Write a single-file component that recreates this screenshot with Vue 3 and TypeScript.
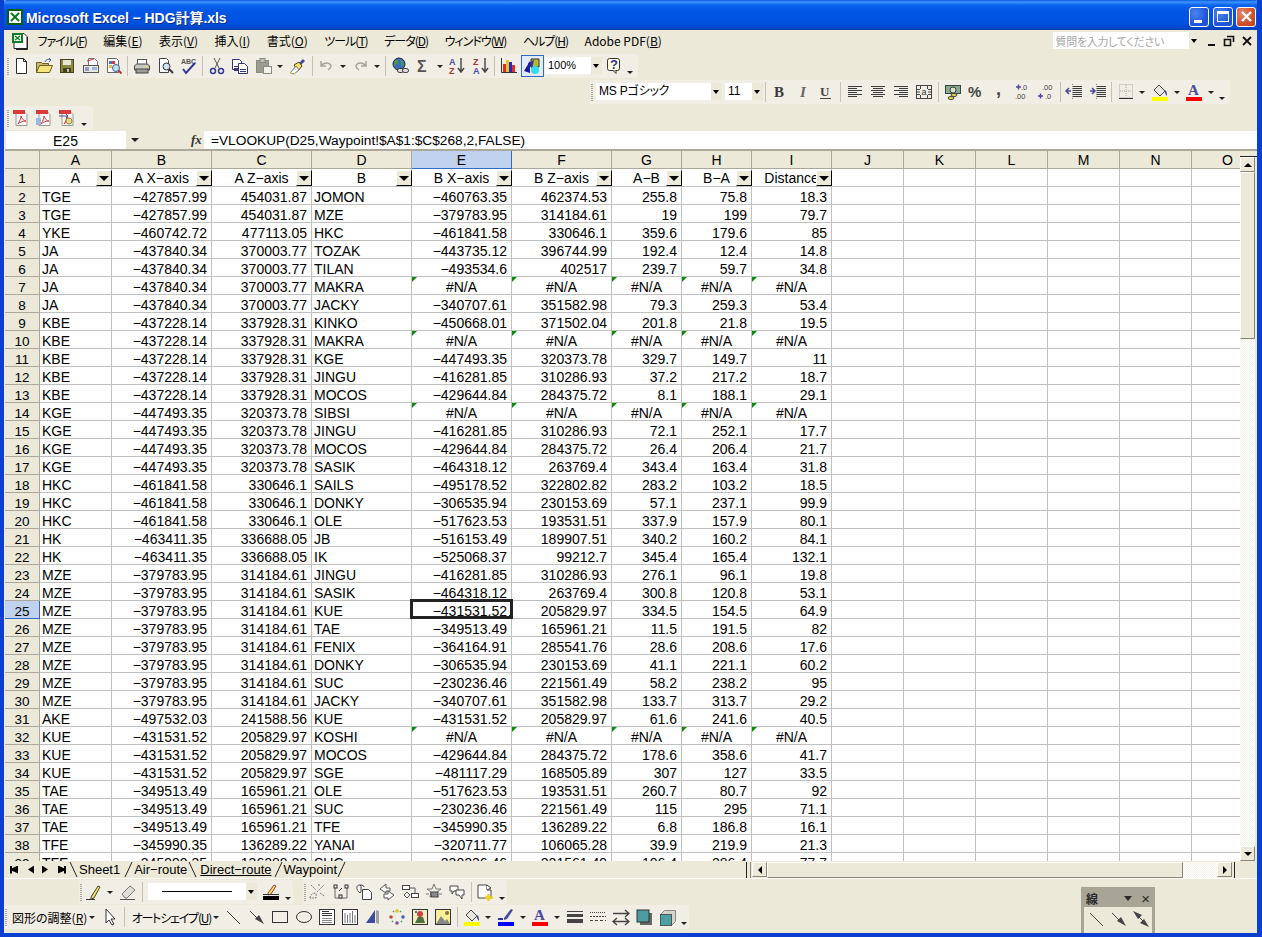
<template>
  <div class="window">
    <div class="titlebar">
      <svg class="app-icon" width="16" height="16" viewBox="0 0 16 16">
        <rect width="16" height="16" fill="#0b5c14" />
        <rect x="2" y="2" width="12" height="12" fill="#fff" />
        <path d="M4 4l8 8M12 4l-8 8" stroke="#0b7a1c" stroke-width="2" />
      </svg>
      <span class="title-text">Microsoft Excel − HDG計算.xls</span>
      <div class="win-buttons">
        <button class="win-btn"><i class="min-glyph"></i></button>
        <button class="win-btn"><i class="max-glyph"></i></button>
        <button class="win-btn close">
          <svg width="13" height="13" viewBox="0 0 13 13"><path d="M2 2l9 9M11 2l-9 9" stroke="#fff" stroke-width="2.4" /></svg>
        </button>
      </div>
    </div>

    <div class="menubar">
      <svg class="menu-doc" width="18" height="18" viewBox="0 0 18 18" v-html="icons.xldoc"></svg>
      <span v-for="m in menus" :key="m.key" class="menu-item" :class="{ kana: m.kana }">{{ m.pre }}<u v-if="m.key">{{ m.key }}</u>{{ m.post }}</span>
      <div class="ask-box"><span>質問を入力してください</span><i class="drop"></i></div>
      <div class="mdi">
        <i class="mdi-min"></i>
        <svg width="12" height="12" viewBox="0 0 12 12"><path d="M4 1.5h6.5V7M1.5 4.5h6v6h-6z" fill="none" stroke="#111" stroke-width="1.6" /></svg>
        <svg width="12" height="12" viewBox="0 0 12 12"><path d="M2 2l8 8M10 2l-8 8" stroke="#111" stroke-width="1.8" /></svg>
      </div>
    </div>

    <div v-for="(bar, bi) in topBars" :key="bi" class="toolbar" :class="bar.cls">
      <template v-for="(it, ii) in bar.items" :key="ii">
        <i v-if="it === ':'" class="grip"></i>
        <i v-else-if="it === '|'" class="sep"></i>
        <i v-else-if="it === 'v'" class="dd"></i>
        <i v-else-if="it === '>'" class="chev"></i>
        <div v-else-if="typeof it === 'object'" class="combo" :class="it.cls"><span>{{ it.text }}</span><i class="drop"></i></div>
        <span v-else class="tb" :class="{ on: it === 'drawing' }">
          <svg width="18" height="18" viewBox="0 0 18 18" v-html="icons[it]"></svg>
        </span>
      </template>
    </div>

    <div class="formula-bar">
      <div class="name-box">E25</div>
      <i class="name-drop"></i>
      <span class="fx">fx</span>
      <div class="formula">=VLOOKUP(D25,Waypoint!$A$1:$C$268,2,FALSE)</div>
    </div>

    <div class="sheet">
      <div class="grid">
        <div class="cell head corner"></div>
        <div v-for="c in columns" :key="c" class="cell head" :class="{ active: c === 'E' }">{{ c }}</div>

        <div class="cell head rowno first">1</div>
        <div v-for="(h, i) in headers" :key="h + i" class="cell title">
          {{ h }}<i class="filter"></i>
        </div>
        <div v-for="n in 6" :key="'e' + n" class="cell"></div>

        <template v-for="(row, r) in rows" :key="r">
          <div class="cell head rowno" :class="{ active: r + 2 === 25 }">{{ r + 2 }}</div>
          <div
            v-for="(v, c) in row"
            :key="c"
            class="cell"
            :class="cellClass(v, c, r)"
          >{{ v }}</div>
          <div v-for="n in 6" :key="'b' + n" class="cell"></div>
        </template>
      </div>
      <div class="vscroll">
        <i class="v-split"></i>
        <button class="sb-btn"><i class="arrow up"></i></button>
        <div class="v-thumb"></div>
        <div class="track"></div>
        <button class="sb-btn"><i class="arrow down"></i></button>
      </div>
    </div>

    <div class="tabbar">
      <div class="tab-nav">
        <i class="nav first"></i><i class="nav prev"></i><i class="nav next"></i><i class="nav last"></i>
      </div>
      <svg class="slash" width="10" height="16" viewBox="0 0 10 16"><path d="M1 0l7 15" stroke="#222" fill="none" /></svg>
      <span class="tab">Sheet1</span>
      <svg class="slash wide" width="14" height="16" viewBox="0 0 14 16"><path d="M5 15L12 0" stroke="#222" fill="none" /></svg>
      <span class="tab">Air−route</span>
      <svg class="slash" width="13" height="16" viewBox="0 0 13 16"><path d="M2 0l7 15" stroke="#222" fill="none" /></svg>
      <span class="tab current">Direct−route</span>
      <svg class="slash" width="12" height="16" viewBox="0 0 12 16"><path d="M3 15L10 0" stroke="#222" fill="none" /></svg>
      <span class="tab">Waypoint</span>
      <svg class="slash" width="10" height="16" viewBox="0 0 10 16"><path d="M1 15L8 0" stroke="#222" fill="none" /></svg>
      <div class="tab-fill"></div>
      <i class="h-split"></i>
      <button class="sb-btn"><i class="arrow left"></i></button>
      <div class="h-thumb"></div>
      <div class="track h"></div>
      <button class="sb-btn"><i class="arrow right"></i></button>
      <i class="h-end"></i>
    </div>

    <div class="draw-dock">
      <div v-for="(line, li) in drawLines" :key="li" class="draw-line" :class="line.cls">
        <div v-for="(bar, bi) in line.bars" :key="bi" class="toolbar flat">
          <template v-for="(it, ii) in bar" :key="ii">
            <i v-if="it === ':'" class="grip"></i>
            <i v-else-if="it === '|'" class="sep"></i>
            <i v-else-if="it === 'v'" class="dd"></i>
            <i v-else-if="it === '>'" class="chev"></i>
            <div v-else-if="typeof it === 'object' && it.cls === 'line-box'" class="combo line-box"><i class="rule"></i><i class="drop"></i></div>
            <span v-else-if="typeof it === 'object'" class="label" :class="it.cls">{{ it.pre }}<u>{{ it.key }}</u>)</span>
            <span v-else class="tb">
              <svg width="18" height="18" viewBox="0 0 18 18" v-html="icons[it]"></svg>
            </span>
          </template>
        </div>
      </div>

      <div class="float-bar">
        <div class="float-title"><b>線</b><i class="float-drop"></i><span>×</span></div>
        <div class="float-icons">
          <svg width="18" height="18" viewBox="0 0 18 18" v-html="icons.line"></svg>
          <svg width="18" height="18" viewBox="0 0 18 18" v-html="icons.arrowline"></svg>
          <svg width="18" height="18" viewBox="0 0 18 18" v-html="icons.dblarrow"></svg>
        </div>
      </div>
    </div>
  </div>
</template>

<script setup lang="ts">
type Combo = { text?: string; cls: string; pre?: string; key?: string }
type Item = string | Combo

const menus = [
  { pre: 'ファイル(', key: 'F', post: ')', kana: true },
  { pre: '編集(', key: 'E', post: ')' },
  { pre: '表示(', key: 'V', post: ')' },
  { pre: '挿入(', key: 'I', post: ')' },
  { pre: '書式(', key: 'O', post: ')' },
  { pre: 'ツール(', key: 'T', post: ')', kana: true },
  { pre: 'データ(', key: 'D', post: ')', kana: true },
  { pre: 'ウィンドウ(', key: 'W', post: ')', kana: true },
  { pre: 'ヘルプ(', key: 'H', post: ')', kana: true },
  { pre: 'Adobe PDF(', key: 'B', post: ')' },
]

const topBars: { cls: string; items: Item[] }[] = [
  {
    cls: 'std',
    items: [':', 'new', 'open', 'save', 'mail', 'perm', '|', 'print', 'preview', 'spell', '|', 'cut', 'copy', 'paste', 'v', 'brush', '|', 'undo', 'v', 'redo', 'v', '|', 'globe', 'sigma', 'v', 'az', 'za', '|', 'chart', 'drawing', { text: '100%', cls: 'zoom' }, 'help', '>'],
  },
  {
    cls: 'fmt',
    items: [':', { text: 'MS Pゴシック', cls: 'font' }, { text: '11', cls: 'size' }, '|', 'bold', 'italic', 'under', '|', 'aleft', 'acenter', 'aright', 'merge', '|', 'money', 'pct', 'comma', 'incdec', 'decdec', '|', 'outdent', 'indent', '|', 'border', 'v', 'fill', 'v', 'fontc', 'v', '>'],
  },
  { cls: 'pdf', items: [':', 'pdf1', 'pdf2', 'pdf3', '>'] },
]

const drawLines: { cls: string; bars: Item[][] }[] = [
  {
    cls: 'one',
    bars: [
      [':', 'pen', 'v', 'eraser', '|', { cls: 'line-box' }, 'linec', '>'],
      [':', 'd1', 'd2', 'd3', 'd4', 'd5', 'd6', 'd7', '|', 'd8', '>'],
    ],
  },
  {
    cls: 'two',
    bars: [
      [':', { cls: 'lab', pre: '図形の調整(', key: 'R' }, 'v', 'cursor', '|', { cls: 'lab kana', pre: 'オートシェイプ(', key: 'U' }, 'v', 'line', 'arrowline', 'rect', 'ellipse', 'textbox', 'vtext', 'wordart', 'diagram', 'clipart', 'image', '|', 'fill', 'v', 'linecolor', 'v', 'fontc', 'v', 'lstyle', 'dash', 'arrows', 'shadow', 'cube', '>'],
    ],
  },
]

const columns = ['A', 'B', 'C', 'D', 'E', 'F', 'G', 'H', 'I', 'J', 'K', 'L', 'M', 'N', 'O']
const headers = ['A', 'A X−axis', 'A Z−axis', 'B', 'B X−axis', 'B Z−axis', 'A−B', 'B−A', 'Distance']

const NA = '#N/A'
const TGE = ['TGE', '−427857.99', '454031.87']
const YKE = ['YKE', '−460742.72', '477113.05']
const JA = ['JA', '−437840.34', '370003.77']
const KBE = ['KBE', '−437228.14', '337928.31']
const KGE = ['KGE', '−447493.35', '320373.78']
const HKC = ['HKC', '−461841.58', '330646.1']
const HK = ['HK', '−463411.35', '336688.05']
const MZE = ['MZE', '−379783.95', '314184.61']
const AKE = ['AKE', '−497532.03', '241588.56']
const KUE = ['KUE', '−431531.52', '205829.97']
const TAE = ['TAE', '−349513.49', '165961.21']
const TFE = ['TFE', '−345990.35', '136289.22']

const rows: string[][] = [
  [...TGE, 'JOMON', '−460763.35', '462374.53', '255.8', '75.8', '18.3'],
  [...TGE, 'MZE', '−379783.95', '314184.61', '19', '199', '79.7'],
  [...YKE, 'HKC', '−461841.58', '330646.1', '359.6', '179.6', '85'],
  [...JA, 'TOZAK', '−443735.12', '396744.99', '192.4', '12.4', '14.8'],
  [...JA, 'TILAN', '−493534.6', '402517', '239.7', '59.7', '34.8'],
  [...JA, 'MAKRA', NA, NA, NA, NA, NA],
  [...JA, 'JACKY', '−340707.61', '351582.98', '79.3', '259.3', '53.4'],
  [...KBE, 'KINKO', '−450668.01', '371502.04', '201.8', '21.8', '19.5'],
  [...KBE, 'MAKRA', NA, NA, NA, NA, NA],
  [...KBE, 'KGE', '−447493.35', '320373.78', '329.7', '149.7', '11'],
  [...KBE, 'JINGU', '−416281.85', '310286.93', '37.2', '217.2', '18.7'],
  [...KBE, 'MOCOS', '−429644.84', '284375.72', '8.1', '188.1', '29.1'],
  [...KGE, 'SIBSI', NA, NA, NA, NA, NA],
  [...KGE, 'JINGU', '−416281.85', '310286.93', '72.1', '252.1', '17.7'],
  [...KGE, 'MOCOS', '−429644.84', '284375.72', '26.4', '206.4', '21.7'],
  [...KGE, 'SASIK', '−464318.12', '263769.4', '343.4', '163.4', '31.8'],
  [...HKC, 'SAILS', '−495178.52', '322802.82', '283.2', '103.2', '18.5'],
  [...HKC, 'DONKY', '−306535.94', '230153.69', '57.1', '237.1', '99.9'],
  [...HKC, 'OLE', '−517623.53', '193531.51', '337.9', '157.9', '80.1'],
  [...HK, 'JB', '−516153.49', '189907.51', '340.2', '160.2', '84.1'],
  [...HK, 'IK', '−525068.37', '99212.7', '345.4', '165.4', '132.1'],
  [...MZE, 'JINGU', '−416281.85', '310286.93', '276.1', '96.1', '19.8'],
  [...MZE, 'SASIK', '−464318.12', '263769.4', '300.8', '120.8', '53.1'],
  [...MZE, 'KUE', '−431531.52', '205829.97', '334.5', '154.5', '64.9'],
  [...MZE, 'TAE', '−349513.49', '165961.21', '11.5', '191.5', '82'],
  [...MZE, 'FENIX', '−364164.91', '285541.76', '28.6', '208.6', '17.6'],
  [...MZE, 'DONKY', '−306535.94', '230153.69', '41.1', '221.1', '60.2'],
  [...MZE, 'SUC', '−230236.46', '221561.49', '58.2', '238.2', '95'],
  [...MZE, 'JACKY', '−340707.61', '351582.98', '133.7', '313.7', '29.2'],
  [...AKE, 'KUE', '−431531.52', '205829.97', '61.6', '241.6', '40.5'],
  [...KUE, 'KOSHI', NA, NA, NA, NA, NA],
  [...KUE, 'MOCOS', '−429644.84', '284375.72', '178.6', '358.6', '41.7'],
  [...KUE, 'SGE', '−481117.29', '168505.89', '307', '127', '33.5'],
  [...TAE, 'OLE', '−517623.53', '193531.51', '260.7', '80.7', '92'],
  [...TAE, 'SUC', '−230236.46', '221561.49', '115', '295', '71.1'],
  [...TAE, 'TFE', '−345990.35', '136289.22', '6.8', '186.8', '16.1'],
  [...TFE, 'YANAI', '−320711.77', '106065.28', '39.9', '219.9', '21.3'],
  [...TFE, 'SUC', '−230236.46', '221561.49', '106.4', '286.4', '77.7'],
]

function cellClass(v: string, c: number, r: number) {
  return {
    txt: c === 0 || c === 3,
    num: c !== 0 && c !== 3,
    err: v === NA,
    selected: c === 4 && r + 2 === 25,
  }
}

const ink = '#3c3c3c'
const blue = '#4a4a9c'
const serif = 'font-weight="bold" style="font-family:\'Liberation Serif\',serif"'
const txt = (x: number, y: number, s: string, size: number, fill: string, extra = '') =>
  `<text x="${x}" y="${y}" font-family="Liberation Sans, sans-serif" font-size="${size}" fill="${fill}" ${extra}>${s}</text>`
const lines = (ys: number[], x1: number, x2: number, c = ink) =>
  ys.map((y) => `<path d="M${x1} ${y}.5H${x2}" stroke="${c}" />`).join('')
const pdf = (extra: string) =>
  `<path d="M4 2.5h8l3 3v11H4z" fill="#f8f8f8" stroke="#9a9a8c" /><rect x="1" y="1" width="12" height="4" fill="#d93a3a" /><path d="M6 15c2-3 3-6 3-8 1 3 3 5 5 5-3 0-6 1-8 3z" fill="none" stroke="#d93a3a" />${extra}`

const icons: Record<string, string> = {
  xldoc: `<path d="M3 1.5h10l3 3v12H3z" fill="#fff" stroke="#222" /><path d="M16.5 5v12.5H5" stroke="#222" fill="none" /><rect x="1" y="1" width="11" height="10" fill="#0f7f24" /><rect x="3" y="3" width="7" height="6" fill="#fff" /><path d="M4 4l5 4M9 4L4 8" stroke="#0f7f24" stroke-width="1.5" />`,
  new: `<path d="M4.5 1.5h7l3 3v12h-10z" fill="#fff" stroke="#2c2c2c" /><path d="M11.5 1.5v3h3" fill="none" stroke="#2c2c2c" />`,
  open: `<path d="M1.5 15.5v-10h5l1 1h6v2" fill="#c9b96a" stroke="#6e5f1e" /><path d="M1.5 15.5l3-7h13l-3 7z" fill="#f4e37e" stroke="#6e5f1e" /><path d="M10 5c1-3 4-3 6-2M14 1l2 2-2 2" fill="none" stroke="#3a56a0" />`,
  save: `<rect x="2.5" y="2.5" width="13" height="13" fill="#8c8742" stroke="#45431f" /><rect x="5" y="3" width="8" height="5" fill="#e8e6d4" /><rect x="5" y="11" width="8" height="4" fill="#45431f" /><rect x="9" y="12" width="2" height="3" fill="#c8c6a4" />`,
  mail: `<path d="M6.5 1.5h6l3 3v5h-9z" fill="#fff" stroke="#777" /><path d="M5 4l7-2" stroke="#d04040" /><rect x="1.5" y="8.5" width="15" height="7" fill="#e8e8e8" stroke="#555" /><path d="M3 11h4M3 13h4" stroke="#4a4a9c" /><rect x="10" y="10" width="5" height="3" fill="#9fb5d5" />`,
  perm: `<path d="M2.5 1.5h9l2 2v12h-11z" fill="#fff" stroke="#666" /><rect x="4" y="4" width="3" height="3" fill="#3a78c0" /><rect x="7" y="4" width="3" height="3" fill="#d04040" /><rect x="4" y="8" width="3" height="3" fill="#e0c040" /><circle cx="11" cy="11" r="3.5" fill="#bfe0ee" stroke="#3c5c90" /><path d="M13.5 13.5l3 3" stroke="#c03030" stroke-width="2" />`,
  print: `<rect x="4.5" y="2.5" width="9" height="5" fill="#fff" stroke="#555" /><path d="M1.5 13V9l2-2h11l2 2v4z" fill="#c8c8c0" stroke="#444" /><rect x="3" y="12" width="12" height="4" fill="#9c9c94" stroke="#444" /><path d="M12 10h2" stroke="#ffe040" />`,
  preview: `<path d="M3.5 1.5h7l2 2v12h-9z" fill="#fff" stroke="#444" /><circle cx="10.5" cy="9.5" r="3.5" fill="#cfe3f3" stroke="#333" /><path d="M13 12l4 4" stroke="#333" stroke-width="2" />`,
  spell: `${txt(1, 7, 'ABC', 7, '#555', 'font-weight="bold"')}<path d="M3 12l3 4 9-10" fill="none" stroke="#35359a" stroke-width="2" />`,
  cut: `<path d="M6 1l5 10M12 1L7 11" stroke="#555" fill="none" /><circle cx="5" cy="14" r="2.5" fill="none" stroke="#3a3a9c" stroke-width="1.5" /><circle cx="13" cy="14" r="2.5" fill="none" stroke="#3a3a9c" stroke-width="1.5" />`,
  copy: `<path d="M1.5 2.5h7l2 2v8h-9z" fill="#fff" stroke="#35357a" /><path d="M7.5 6.5h6l3 3v7h-9z" fill="#fff" stroke="#35357a" />${lines([9, 11, 13], 3, 7, '#35357a')}${lines([12, 14], 9, 15, '#35357a')}`,
  paste: `<rect x="1.5" y="3.5" width="12" height="12" fill="#9c9c90" stroke="#8a8a80" /><rect x="5" y="1.5" width="5" height="4" fill="#bdbdb0" stroke="#8a8a80" /><rect x="8.5" y="9.5" width="8" height="7" fill="#f3f2ea" stroke="#8a8a80" />`,
  brush: `<path d="M10 6l4-4 2 2-4 4z" fill="#4a4a9c" /><path d="M5 8l5-3 3 4-4 5z" fill="#f5e35e" stroke="#444" /><path d="M1 16l6-7 3 4-5 4z" fill="#fff" stroke="#777" /><path d="M1 16h2M5 17h2" stroke="#ffe040" />`,
  undo: `<path d="M4 4v5h5M4 9c3-4 9-4 10 0 0 2-2 3-3 4" fill="none" stroke="#a8a69a" stroke-width="1.5" />`,
  redo: `<path d="M14 4v5H9M14 9c-3-4-9-4-10 0 0 2 2 3 3 4" fill="none" stroke="#a8a69a" stroke-width="1.5" />`,
  globe: `<circle cx="8" cy="7" r="6" fill="#3b6fb8" stroke="#223" /><path d="M4 3c2 0 4 1 3 3-1 1-3 1-4 3M9 2c2 2 3 3 4 7-2 0-3-2-3-3" fill="#4aa04a" /><rect x="6.5" y="11.5" width="6" height="4" rx="2" fill="#ddd" stroke="#333" /><rect x="11.5" y="11.5" width="6" height="4" rx="2" fill="#ddd" stroke="#333" />`,
  sigma: txt(3, 15, 'Σ', 16, '#555', 'font-weight="bold"'),
  az: `${txt(1, 8, 'A', 9, '#4a4aa4', 'font-weight="bold"')}${txt(1, 17, 'Z', 9, '#a03838', 'font-weight="bold"')}<path d="M13 1v13M10 11l3 4 3-4" fill="none" stroke="#444" stroke-width="1.4" />`,
  za: `${txt(1, 8, 'Z', 9, '#a03838', 'font-weight="bold"')}${txt(1, 17, 'A', 9, '#4a4aa4', 'font-weight="bold"')}<path d="M13 1v13M10 11l3 4 3-4" fill="none" stroke="#444" stroke-width="1.4" />`,
  chart: `<path d="M1.5 1v14.5H17" fill="none" stroke="#333" /><rect x="3" y="7" width="3" height="8" fill="#d83030" /><rect x="6" y="3" width="3" height="12" fill="#e8c820" /><rect x="9" y="5" width="3" height="10" fill="#2828c8" /><rect x="12" y="8" width="3" height="7" fill="#d83030" />`,
  drawing: `<path d="M8 2h8v8H8z" fill="#b8b830" stroke="#333" /><path d="M5 6l6-3-2 9z" fill="#30309c" /><path d="M1 14L7 4v12z" fill="#1a1a9c" /><circle cx="12" cy="13" r="4" fill="#33dcec" />`,
  help: `<rect x="2.5" y="1.5" width="12" height="12" rx="2" fill="#fffde0" stroke="#333" /><path d="M8 13.5l3 3v-3" fill="#fffde0" stroke="#333" />${txt(5, 12, '?', 13, '#30309c', 'font-weight="bold"')}`,
  bold: txt(3, 14, 'B', 15, '#3c3c3c', serif),
  italic: txt(6, 14, 'I', 15, '#666', `${serif} font-style="italic"`),
  under: `${txt(3, 13, 'U', 13, '#444', serif)}<path d="M3 15.5h11" stroke="#444" />`,
  aleft: lines([3, 7, 11], 2, 16) + lines([5, 9, 13], 2, 11),
  acenter: lines([3, 7, 11], 2, 16) + lines([5, 9, 13], 4, 14),
  aright: lines([3, 7, 11], 2, 16) + lines([5, 9, 13], 7, 16),
  merge: `<rect x="1.5" y="2.5" width="15" height="13" fill="none" stroke="#444" /><path d="M1 6.5h4M13 6.5h4M1 11.5h4M13 11.5h4M5.5 3v3M12.5 3v3M5.5 12v3M12.5 12v3" stroke="#444" /><path d="M2 9h3M13 9h3" stroke="#444" />${txt(6.5, 12, 'a', 9, '#333')}`,
  money: `<rect x="1.5" y="2.5" width="15" height="8" fill="#8aa88a" stroke="#344" /><circle cx="9" cy="7" r="3" fill="#d8e0c8" stroke="#344" /><ellipse cx="10" cy="12" rx="3" ry="1.5" fill="#e8dc50" stroke="#444" /><ellipse cx="7" cy="15" rx="3" ry="1.5" fill="#e8dc50" stroke="#444" />`,
  pct: txt(1, 14, '%', 15, '#444', 'font-weight="bold"'),
  comma: txt(6, 12, ',', 18, '#444', 'font-weight="bold"'),
  incdec: `<path d="M2 4h5M4.5 1.5v5" stroke="${blue}" stroke-width="1.5" />${txt(7, 7, '.0', 7.5, '#444')}${txt(1, 16, '.00', 7.5, '#444')}`,
  decdec: `${txt(5, 7, '.00', 7.5, '#444')}<path d="M1 13h5M3.5 10.5v5" stroke="${blue}" stroke-width="1.5" />${txt(8, 16, '.0', 7.5, '#444')}`,
  outdent: `${lines([3, 5, 7, 9, 11, 13], 8, 17)}<path d="M1 8h5M4 5L1 8l3 3" fill="none" stroke="${blue}" stroke-width="1.5" /><path d="M7.5 1v16" stroke="#888" stroke-dasharray="1 1" />`,
  indent: `${lines([3, 5, 7, 9, 11, 13], 8, 17)}<path d="M1 8h5M3 5l3 3-3 3" fill="none" stroke="${blue}" stroke-width="1.5" /><path d="M7.5 1v16" stroke="#888" stroke-dasharray="1 1" />`,
  border: `<rect x="2.5" y="1.5" width="13" height="13" fill="none" stroke="#aaa" stroke-dasharray="1 1" /><path d="M9 2v12M3 8h12" stroke="#aaa" stroke-dasharray="1 1" /><path d="M2 15.5h14" stroke="#333" />`,
  fill: `<path d="M3 7l5-5 6 6-5 5z" fill="#e8e8e0" stroke="#444" /><path d="M14 7c2 1 2 4 2 6-1-1-3-4-2-6z" fill="#4a4a9c" /><rect x="1" y="14" width="16" height="4" fill="#ffff00" />`,
  fontc: `${txt(3, 12, 'A', 15, blue, serif)}<rect x="1" y="14" width="16" height="4" fill="#ff0000" />`,
  pdf1: pdf(''),
  pdf2: pdf('<rect x="1" y="9" width="5" height="7" fill="#9cb8e0" />'),
  pdf3: pdf('<path d="M1 7h9l-2-2M10 7l-2 2" fill="none" stroke="#4a4a9c" /><circle cx="11" cy="12" r="3" fill="#eed878" stroke="#886" />'),
  pen: `<path d="M1 16.5h9" stroke="#333" /><path d="M6 14l7-11 2 1-6 11-3 1z" fill="#f0e060" stroke="#444" />`,
  eraser: `<path d="M3 11l8-8 5 4-8 8H6z" fill="#e0dfd8" stroke="#777" /><path d="M1 16.5h15" stroke="#555" />`,
  linec: `<path d="M6 10l6-8 2 1-5 8-3 1z" fill="#f0e060" stroke="#a04040" /><path d="M1 11.5h16" stroke="#333" /><rect x="1" y="13" width="16" height="4" fill="#000" />`,
  d1: `<path d="M2 15c0-3 3-5 5-5s1 4 1 5zM9 9l7-7M3 2l5 5M12 10l4 3M10 2h2" fill="none" stroke="#777" stroke-dasharray="2 1" />`,
  d2: `<path d="M3 4v11h12V3" fill="none" stroke="#666" /><rect x="2" y="2" width="3" height="3" fill="#eee" stroke="#333" /><rect x="7" y="12" width="3" height="3" fill="#eee" stroke="#333" /><rect x="13" y="2" width="3" height="3" fill="#eee" stroke="#333" /><path d="M7 8l3-3" stroke="#333" />`,
  d3: `<path d="M5 2c-4 0-4 4-1 7l1 1 1-1V3zM5 2c3 0 4 1 4 2" fill="#fff" stroke="#444" /><path d="M7.5 6.5h6l3 3v7h-9z" fill="#fff" stroke="#444" />`,
  d4: `<path d="M8 1L2 6l6 4V8h4V5H8zM10 8l6 4-6 5v-2H6v-4h4z" fill="#fff" stroke="#555" />`,
  d5: `<rect x="1.5" y="2.5" width="7" height="4" fill="#fff" stroke="#444" /><path d="M3 12l3-3 3 3-3 3zM8 5h6v6" fill="none" stroke="#555" /><rect x="10.5" y="10.5" width="7" height="4" fill="#fff" stroke="#444" />`,
  d6: `<path d="M9 1l2 5h5l-4 3 1 5-4-3-4 3 1-5-4-3h5z" fill="none" stroke="#777" /><rect x="6" y="9" width="7" height="5" fill="#888" stroke="#444" /><path d="M1 11h3M14 11h3" stroke="#777" />`,
  d7: `<path d="M2 3h8v5H6l-2 3V8H2z" fill="#fff" stroke="#444" /><path d="M8 7h8v5h-2v4l-3-4H8z" fill="#fff" stroke="#444" />`,
  d8: `<path d="M2 2h9v5h4v8H2z" fill="#fff" stroke="#444" /><path d="M11 2l4 3-4 2" fill="#fff" stroke="#444" /><path d="M12.5 11v7M9 14.5h8" stroke="#f0d020" stroke-width="2.4" />`,
  cursor: `<path d="M5 1v14l3-3 3 5 2-1-3-5h4z" fill="#fff" stroke="#333" />`,
  line: `<path d="M2 3l13 13" stroke="#444" />`,
  arrowline: `<path d="M2 3l8 8" stroke="#444" /><path d="M7 11l4-4 5 9z" fill="#444" />`,
  dblarrow: `<path d="M4 4l10 10" stroke="#444" /><path d="M1 1l9 4-4 4zM17 17l-9-4 4-4z" fill="#444" />`,
  rect: `<rect x="1.5" y="3.5" width="15" height="11" fill="none" stroke="#333" />`,
  ellipse: `<ellipse cx="9" cy="9" rx="7.5" ry="5.5" fill="none" stroke="#333" />`,
  textbox: `<rect x="1.5" y="1.5" width="15" height="15" fill="#fff" stroke="#333" /><path d="M4 3.5h7M4 5.5h10M4 7.5h10" stroke="#333" /><path d="M4 10.5h10M4 12.5h10M4 14.5h10" stroke="#888" />`,
  vtext: `<rect x="1.5" y="1.5" width="15" height="15" fill="#fff" stroke="#333" /><path d="M4 5v10M6.5 7v8M9 5v10M11.5 3v12M14 7v8" stroke="#777" />`,
  wordart: `<path d="M2 15L11 2v13zM7 11h4" fill="#3c4ca0" /><path d="M12 2l3 1v13l-3-1z" fill="#a0a0a0" />`,
  diagram: `<circle cx="9" cy="3" r="1.8" fill="#e8c020" /><circle cx="3" cy="9" r="1.8" fill="#d04040" /><circle cx="15" cy="9" r="1.8" fill="#4060c0" /><circle cx="9" cy="15" r="1.8" fill="#8050a0" /><path d="M5 4l1-1M13 4l-1-1M4 13l1 1M14 13l-1 1" stroke="#30a060" stroke-width="1.5" />`,
  clipart: `<rect x="1.5" y="1.5" width="15" height="15" fill="#f4ecc0" stroke="#333" /><circle cx="9" cy="6" r="3" fill="#c84040" /><path d="M4 15l3-6h5l2 6z" fill="#507040" /><circle cx="5" cy="4" r="1" fill="#3050b0" />`,
  image: `<rect x="1.5" y="1.5" width="15" height="15" fill="#f8f098" stroke="#333" /><path d="M2 16l5-8 4 5 2-2 3 5z" fill="#888" /><circle cx="13" cy="5" r="2" fill="#887048" />`,
  linecolor: `<path d="M7 10l7-9 2 1-6 9-3 1z" fill="#4a4a9c" /><path d="M1 11h5" stroke="#30309c" stroke-width="2" /><rect x="1" y="14" width="16" height="4" fill="#0000ff" />`,
  lstyle: `<rect x="1" y="3" width="16" height="1" fill="#444" /><rect x="1" y="6" width="16" height="3" fill="#444" /><rect x="1" y="11" width="16" height="4" fill="#444" />`,
  dash: `<path d="M1 4.5h16" stroke="#444" stroke-dasharray="1 1" /><path d="M1 8.5h16" stroke="#444" stroke-dasharray="2 1" /><path d="M1 12.5h16" stroke="#444" stroke-dasharray="3 2" />`,
  arrows: `<path d="M1 5.5h16M13 2l4 3.5-4 3.5M1 13.5h16M5 10l-4 3.5L5 17M13 10l4 3.5-4 3.5" fill="none" stroke="#444" stroke-width="1.4" />`,
  shadow: `<rect x="5" y="5" width="12" height="12" fill="#666" /><rect x="2" y="2" width="12" height="12" fill="#4a9ca0" stroke="#333" />`,
  cube: `<path d="M1.5 6.5l4-4h11v11l-4 4h-11z" fill="#d4d4cc" stroke="#888" /><rect x="1.5" y="6.5" width="11" height="11" fill="#4aa0a4" stroke="#555" />`,
}
</script>

<style scoped>
.window {
  width: 1262px;
  height: 937px;
  box-sizing: border-box;
  position: relative;
  overflow: hidden;
  display: flex;
  flex-direction: column;
  background: #ece9d8;
  border: 4px solid #0a3fd0;
  border-top: 0;
  border-right-width: 5px;
  font-family: "Liberation Sans", "Noto Sans CJK JP", sans-serif;
  font-size: 14px;
  color: #000;
}

.titlebar {
  height: 30px;
  flex: none;
  box-sizing: border-box;
  margin: 0 -5px 0 -4px;
  padding: 3px 0 0 7px;
  display: flex;
  align-items: center;
  gap: 3px;
  background: linear-gradient(180deg, #0a56e0 0, #3d95ff 2px, #0a63ee 5px, #0055e5 12px, #0053e0 22px, #0046c8 28px, #003cb0 30px);
  border-radius: 7px 7px 0 0;
}
.title-text {
  color: #fff;
  font-weight: bold;
  font-size: 14px;
  letter-spacing: -0.05px;
  text-shadow: 1px 1px 0 #0a2a8c;
}
.win-buttons {
  margin-left: auto;
  margin-right: 6px;
  display: flex;
  gap: 3.5px;
}
.win-btn {
  width: 20px;
  height: 20px;
  padding: 0;
  border: 1px solid #fff;
  border-radius: 3px;
  background: radial-gradient(circle at 30% 30%, #4a86f0, #1a50d8 70%, #2a60e0);
  display: flex;
  align-items: center;
  justify-content: center;
  position: relative;
}
.win-btn.close {
  background: radial-gradient(circle at 30% 30%, #e88a6a, #d0502c 60%, #b8401c);
}
.min-glyph {
  width: 8px;
  height: 3px;
  background: #fff;
  position: absolute;
  left: 4px;
  bottom: 3px;
}
.max-glyph {
  width: 12px;
  height: 11px;
  box-sizing: border-box;
  border: 1px solid #fff;
  border-top-width: 3px;
}

.menubar {
  height: 24px;
  flex: none;
  box-sizing: border-box;
  display: flex;
  align-items: center;
  padding: 0 0 3px 7px;
  gap: 16.5px;
  font-family: "Noto Sans CJK JP", sans-serif;
  font-size: 12px;
  font-feature-settings: "palt";
  position: relative;
}
.menu-doc {
  margin-right: -8px;
  flex: none;
}
.menu-item {
  white-space: nowrap;
}
.kana {
  letter-spacing: -1px;
}
.ask-box {
  margin-left: auto;
  width: 147px;
  height: 17px;
  background: #fff;
  color: #a6a6a6;
  display: flex;
  align-items: center;
  justify-content: space-between;
  padding-left: 3px;
  box-sizing: border-box;
  font-size: 11px;
  letter-spacing: -0.3px;
}
.mdi {
  display: flex;
  align-items: center;
  gap: 6px;
  margin-left: -8px;
  margin-right: 4px;
}
.mdi-min {
  width: 7px;
  height: 2px;
  background: #111;
  margin-top: 8px;
  margin-right: 2px;
}
.drop {
  width: 11px;
  height: 100%;
  flex: none;
  background: #ece9d8;
  position: relative;
}
.drop::after {
  content: "";
  position: absolute;
  left: 2px;
  top: 50%;
  margin-top: -2px;
  border: 3px solid transparent;
  border-top: 4px solid #000;
  border-bottom: 0;
}

.toolbar {
  height: 24px;
  flex: none;
  display: flex;
  align-items: center;
  background: #f1efe5;
  border-radius: 3px;
}
.toolbar.std {
  width: 632px;
  margin-left: 2px;
}
.toolbar.fmt {
  width: 640px;
  margin: 2px 0 0 586px;
}
.toolbar.pdf {
  width: 87px;
  margin: 2px 0 1px 2px;
}
.grip {
  width: 2px;
  height: 17px;
  margin: 0 0 0 1px;
  flex: none;
  background: repeating-linear-gradient(180deg, #aca899 0 1px, transparent 1px 2px);
}
.sep {
  width: 1px;
  height: 20px;
  margin: 0 2px;
  flex: none;
  background: #c5c2b2;
}
.tb {
  width: 23.3px;
  height: 22px;
  flex: none;
  display: flex;
  align-items: center;
  justify-content: center;
  box-sizing: border-box;
}
.tb.on {
  background: #e2ebf8;
  border: 1px solid #316ac5;
}
.dd {
  width: 11px;
  height: 22px;
  flex: none;
  position: relative;
}
.dd::after,
.chev::after {
  content: "";
  position: absolute;
  left: 2px;
  top: 10px;
  border: 3px solid transparent;
  border-top: 3px solid #222;
  border-bottom: 0;
}
.chev {
  width: 10px;
  height: 22px;
  flex: none;
  position: relative;
}
.chev::after {
  top: 16px;
}
.combo {
  height: 17px;
  background: #fff;
  flex: none;
  align-self: flex-start;
  margin-top: 3px;
  display: flex;
  align-items: center;
  justify-content: space-between;
  box-sizing: border-box;
  padding-left: 3px;
  font-size: 12px;
  line-height: 14px;
  font-feature-settings: "palt";
}
.combo span {
  padding-bottom: 2px;
}
.combo.zoom {
  width: 57px;
  margin-left: 1px;
  font-size: 11px;
}
.combo.font {
  width: 126px;
  margin-left: 3px;
  margin-right: 3px;
  letter-spacing: -0.2px;
}
.combo.size {
  width: 38px;
}

.formula-bar {
  height: 18px;
  flex: none;
  display: flex;
  align-items: center;
  padding-left: 2px;
}
.name-box {
  width: 120px;
  height: 100%;
  background: #fff;
  text-align: center;
  line-height: 20px;
  padding-right: 1px;
  box-sizing: border-box;
}
.name-drop {
  margin-left: 5px;
  border: 4px solid transparent;
  border-top: 4px solid #222;
  border-bottom: 0;
}
.fx {
  margin-left: 52px;
  width: 13px;
  font: italic bold 13px "Liberation Serif", serif;
  color: #333;
}
.formula {
  flex: 1;
  height: 100%;
  background: #fff;
  padding-left: 7px;
  line-height: 20px;
  font-size: 13.7px;
  white-space: nowrap;
}

.sheet {
  height: 712px;
  flex: none;
  display: flex;
  margin-left: 1px;
  border-top: 2px solid #aca899;
  box-sizing: border-box;
}
.grid {
  flex: 1;
  min-width: 0;
  overflow: hidden;
  display: grid;
  grid-template-columns: 35px 72px 100px 100px 100px 100px 100px 70px 70px 80px 72px 72px 72px 72px 72px 72px;
  grid-auto-rows: 18px;
  background: #fff;
}
.cell {
  box-sizing: border-box;
  border-right: 1px solid #c0c0c0;
  border-bottom: 1px solid #c0c0c0;
  padding-top: 2px;
  line-height: 17px;
  white-space: nowrap;
  position: relative;
  font-size: 14px;
}
.head {
  background: #ece9d8;
  border-color: #aca899;
  text-align: center;
  padding-top: 1px;
}
.head.active {
  background: #c1d2ee;
  border-right-color: #316ac5;
  border-bottom-color: #316ac5;
}
.rowno {
  font-size: 13.5px;
  padding-top: 2px;
}
.rowno.first,
.title {
  padding-top: 1px;
}
.title {
  text-align: center;
}
.filter {
  position: absolute;
  right: -1px;
  top: 1px;
  width: 16px;
  height: 16px;
  box-sizing: border-box;
  background: #ece9d8;
  border-right: 1px solid #000;
  border-bottom: 1px solid #000;
  border-top: 1px solid #fff;
  border-left: 1px solid #fff;
}
.filter::after {
  content: "";
  position: absolute;
  left: 2px;
  top: 5px;
  border: 5px solid transparent;
  border-top: 5px solid #000;
  border-bottom: 0;
}
.txt {
  padding-left: 2px;
}
.num {
  text-align: right;
  padding-right: 4px;
}
.err {
  text-align: center;
  padding-right: 0;
}
.err::before {
  content: "";
  position: absolute;
  left: 0;
  top: 0;
  border-top: 5px solid #0a8a0a;
  border-right: 5px solid transparent;
}
.selected::after {
  content: "";
  position: absolute;
  inset: -2px -2px -1px -2px;
  border: 3px solid #222;
  background: linear-gradient(#222, #222) no-repeat right -4px bottom -4px / 5px 5px;
  background-clip: border-box;
  z-index: 1;
}

.vscroll {
  width: 17px;
  flex: none;
  display: flex;
  flex-direction: column;
  background: #ece9d8;
}
.v-split {
  height: 6px;
  flex: none;
  border-bottom: 1px solid #222;
  box-sizing: border-box;
}
.sb-btn {
  width: 15px;
  height: 15px;
  flex: none;
  padding: 0;
  background: #ece9d8;
  border: 1px solid;
  border-color: #fff #8a8778 #8a8778 #fff;
  display: flex;
  align-items: center;
  justify-content: center;
}
.arrow {
  width: 0;
  height: 0;
  border: 4px solid transparent;
}
.arrow.up { border-bottom: 4px solid #000; border-top: 0; }
.arrow.down { border-top: 4px solid #000; border-bottom: 0; }
.arrow.left { border-right: 4px solid #000; border-left: 0; }
.arrow.right { border-left: 4px solid #000; border-right: 0; }
.v-thumb {
  height: 167px;
  width: 15px;
  flex: none;
  box-sizing: border-box;
  background: #ece9d8;
  border: 1px solid;
  border-color: #fff #8a8778 #8a8778 #fff;
}
.track {
  flex: 1;
  width: 15px;
  background: repeating-conic-gradient(#f4f2e8 0 25%, #fff 0 50%) 0 0 / 2px 2px;
}

.tabbar {
  height: 17px;
  flex: none;
  margin-left: 1px;
  display: flex;
  align-items: center;
  border-bottom: 1px solid #fff;
}
.tab-nav {
  display: flex;
  gap: 8px;
  width: 64px;
  padding-left: 5px;
  box-sizing: border-box;
  flex: none;
}
.nav {
  width: 8px;
  height: 8px;
  flex: none;
  background: #000;
}
.nav.first { clip-path: polygon(0 0, 25% 0, 25% 35%, 100% 0, 100% 100%, 25% 65%, 25% 100%, 0 100%); }
.nav.prev { clip-path: polygon(100% 0, 100% 100%, 25% 50%); }
.nav.next { clip-path: polygon(0 0, 0 100%, 75% 50%); }
.nav.last { clip-path: polygon(0 0, 75% 35%, 75% 0, 100% 0, 100% 100%, 75% 100%, 75% 65%, 0 100%); }
.slash {
  flex: none;
}
.tab {
  flex: none;
  line-height: 16px;
  font-size: 13px;
}
.tab.current {
  text-decoration: underline;
}
.tab-fill {
  flex: 1;
}
.h-split {
  width: 3px;
  height: 16px;
  flex: none;
  border-left: 1px solid #222;
  border-right: 1px solid #8a8778;
  margin-right: 1px;
}
.h-thumb {
  width: 416px;
  height: 16px;
  flex: none;
  box-sizing: border-box;
  border: 1px solid;
  border-color: #fff #8a8778 #8a8778 #fff;
}
.track.h {
  flex: none;
  width: 34px;
  height: 16px;
}
.h-end {
  width: 22px;
  height: 16px;
  flex: none;
  border-left: 1px solid #222;
  margin-left: 2px;
}

.draw-dock {
  flex: 1;
  min-height: 0;
  position: relative;
  display: flex;
  flex-direction: column;
}
.draw-line {
  display: flex;
}
.draw-line.one {
  margin: 1px 0 1px 75px;
  gap: 10px;
}
.draw-line.two {
  margin-top: 0;
}
.toolbar.flat {
  height: 24px;
}
.label {
  font-family: "Noto Sans CJK JP", sans-serif;
  font-size: 12px;
  font-feature-settings: "palt";
  white-space: nowrap;
  margin-left: 5px;
}
.label.kana {
  letter-spacing: -1.2px;
}
.combo.line-box {
  width: 109px;
  margin: 3px 2px 0 3.7px;
}
.rule {
  width: 70px;
  height: 1px;
  background: #000;
  margin-left: 11px;
}
.float-bar {
  position: absolute;
  left: 1077px;
  top: 8px;
  width: 74px;
  height: 60px;
  box-sizing: border-box;
  border: 3px solid #a8a597;
  background: #ece9d8;
}
.float-title {
  height: 17px;
  background: #a8a597;
  display: flex;
  align-items: center;
  padding: 0 2px;
  color: #2a2a2a;
  font-size: 12px;
  font-family: "Noto Sans CJK JP", sans-serif;
}
.float-title b {
  flex: 1;
}
.float-drop {
  border: 4px solid transparent;
  border-top: 5px solid #2a2a2a;
  border-bottom: 0;
  margin-right: 9px;
}
.float-title span {
  font-size: 15px;
  line-height: 14px;
  font-family: "Liberation Sans", sans-serif;
}
.float-icons {
  display: flex;
  justify-content: space-between;
  padding: 3px 2px 0 4px;
}
</style>

<style>
html, body {
  margin: 0;
  background: #ece9d8;
}
</style>
